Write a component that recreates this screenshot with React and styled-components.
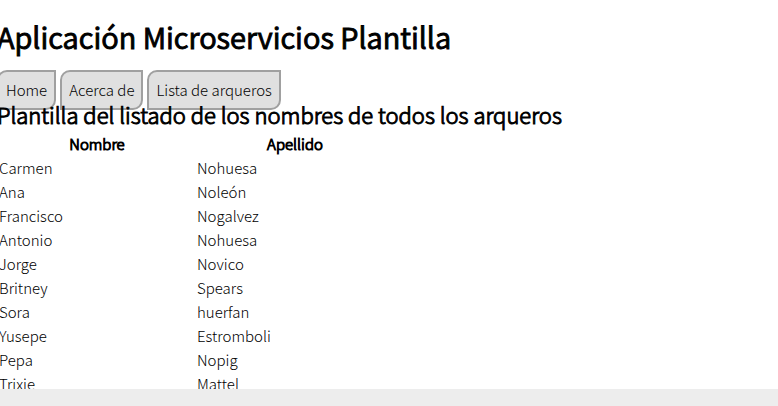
import React from "react";
import styled, { createGlobalStyle } from "styled-components";

const GlobalStyle = createGlobalStyle`
  body {
    margin: 0;
    overflow: hidden;
    background: #fff;
    color: #000;
    font: 300 15px/22px "Noto Sans CJK SC", sans-serif;
  }
`;

const Page = styled.main`
  display: flex;
  flex-direction: column;
  align-items: flex-start;
  margin-left: -3px;
  padding-top: 17px;
`;

const Title = styled.h1`
  margin: 0;
  font-size: 29px;
  line-height: 38px;
  font-weight: 350;
  -webkit-text-stroke: 1px #000;
`;

const Menu = styled.nav`
  display: flex;
  gap: 4px;
  margin-top: 15px;
`;

const MenuLink = styled.a`
  padding: 7px;
  border: 2px solid #a0a0a0;
  border-radius: 10px 0;
  background: #e0e0e0;
  color: #000;
  text-decoration: none;
`;

const Subtitle = styled.h2`
  margin: -10px 0 0;
  font-size: 22px;
  line-height: 28px;
  font-weight: 300;
  -webkit-text-stroke: 1px #000;
`;

const Table = styled.table`
  width: 398px;
  margin-top: 3px;
  border-spacing: 2px;
  table-layout: fixed;
  th, td { padding: 0; }
  th {
    font-weight: 300;
    -webkit-text-stroke: 1px #000;
  }
`;

const Footer = styled.footer`
  position: fixed;
  inset: auto 0 0;
  height: 17px;
  background: #ededed;
`;

const links = ["Home", "Acerca de", "Lista de arqueros"];

const archers = [
  ["Carmen", "Nohuesa"],
  ["Ana", "Noleón"],
  ["Francisco", "Nogalvez"],
  ["Antonio", "Nohuesa"],
  ["Jorge", "Novico"],
  ["Britney", "Spears"],
  ["Sora", "huerfan"],
  ["Yusepe", "Estromboli"],
  ["Pepa", "Nopig"],
  ["Trixie", "Mattel"],
];

export default function App() {
  return (
    <>
      <GlobalStyle />
      <Page>
        <Title>Aplicación Microservicios Plantilla</Title>
        <Menu>
          {links.map((label) => (
            <MenuLink href="#" key={label}>{label}</MenuLink>
          ))}
        </Menu>
        <Subtitle>Plantilla del listado de los nombres de todos los arqueros</Subtitle>
        <Table>
          <thead>
            <tr><th scope="col">Nombre</th><th scope="col">Apellido</th></tr>
          </thead>
          <tbody>
            {archers.map(([name, surname]) => (
              <tr key={name}><td>{name}</td><td>{surname}</td></tr>
            ))}
          </tbody>
        </Table>
      </Page>
      <Footer />
    </>
  );
}
